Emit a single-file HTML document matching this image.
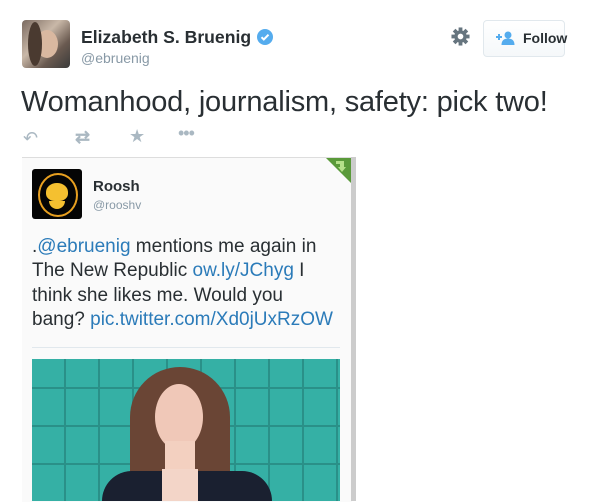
<!DOCTYPE html>
<html><head><meta charset="utf-8"><style>
body{margin:0;width:610px;height:501px;background:#fff;overflow:hidden;position:relative;font-family:"Liberation Sans",Arial,sans-serif;}
.a{position:absolute}
</style></head><body>
<div class="a" style="left:22px;top:20px;width:48px;height:48px;border-radius:4px;background:linear-gradient(135deg,#7a6a60,#c9b8a8 40%,#6a5a50 70%,#3a3a3a);overflow:hidden">
 <div class="a" style="left:14px;top:10px;width:22px;height:28px;border-radius:50%;background:#d9b8a0"></div>
 <div class="a" style="left:6px;top:2px;width:14px;height:44px;border-radius:50%;background:#4a3a30"></div>
</div>
<div class="a" style="left:81px;top:27px;font-size:17.6px;font-weight:bold;color:#292f33">Elizabeth S. Bruenig</div>
<svg class="a" style="left:257px;top:29px" width="16" height="16" viewBox="0 0 16 16"><circle cx="8" cy="8" r="8" fill="#55acee"/><path d="M4.5 8.2l2.3 2.3 4.7-4.8" stroke="#fff" stroke-width="2" fill="none"/></svg>
<div class="a" style="left:81px;top:50px;font-size:14px;color:#8899a6">@ebruenig</div>
<svg class="a" style="left:451px;top:27px" width="19" height="19" viewBox="0 0 20 20"><g fill="#66757f"><circle cx="10" cy="10" r="6.5"/><rect x="8" y="0.5" width="4" height="19"/><rect x="0.5" y="8" width="19" height="4"/><rect x="8" y="0.5" width="4" height="19" transform="rotate(45 10 10)"/><rect x="8" y="0.5" width="4" height="19" transform="rotate(-45 10 10)"/></g><circle cx="10" cy="10" r="3" fill="#fff"/></svg>
<div class="a" style="left:483px;top:20px;width:80px;height:35px;border:1px solid #e1e8ed;border-radius:4px;background:linear-gradient(#fff,#f5f8fa)"></div>
<svg class="a" style="left:496px;top:31px" width="20" height="14" viewBox="0 0 20 14"><g fill="#55acee"><rect x="0" y="5" width="6" height="2"/><rect x="2" y="3" width="2" height="6"/><circle cx="12" cy="4" r="3.5"/><path d="M5.5 14c0-5 3-6.5 6.5-6.5s6.5 1.5 6.5 6.5z"/></g></svg>
<div class="a" style="left:523px;top:30px;font-size:14px;font-weight:bold;color:#292f33">Follow</div>
<div class="a" style="left:21px;top:86px;font-size:29px;color:#292f33;letter-spacing:-0.2px">Womanhood, journalism, safety: pick two!</div>
<div class="a" style="left:23px;top:128px;font-size:18px;color:#aab8c2">
<span class="a" style="left:0;top:0">&#x21B6;</span><span class="a" style="left:52px;top:-1px;font-weight:bold">&#x21C4;</span><span class="a" style="left:106px;top:-2px">&#x2605;</span><span class="a" style="left:155px;top:-5px;letter-spacing:-1px">&bull;&bull;&bull;</span></div>
<div class="a" style="left:22px;top:157px;width:330px;height:344px;background:#fafafa;border-top:1px solid #ddd"></div>
<div class="a" style="left:351px;top:157px;width:5px;height:344px;background:#ccc"></div>
<svg class="a" style="left:326px;top:158px" width="25" height="25" viewBox="0 0 25 25"><path d="M0 0H25V25Z" fill="#5a9a3a"/><path d="M10 3h8v6h2l-4 5-4-5h2V6h-4z" fill="#b5e08a"/></svg>
<div class="a" style="left:32px;top:169px;width:50px;height:50px;border-radius:3px;background:#050505;overflow:hidden">
 <div class="a" style="left:6px;top:4px;width:36px;height:40px;border:2px solid #e8a020;border-radius:50%"></div>
 <div class="a" style="left:14px;top:14px;width:22px;height:18px;border-radius:50% 50% 40% 40%;background:#f5c030"></div>
 <div class="a" style="left:17px;top:32px;width:16px;height:8px;border-radius:0 0 8px 8px;background:#f5c030"></div>
</div>
<div class="a" style="left:93px;top:178px;font-size:15px;font-weight:bold;color:#292f33">Roosh</div>
<div class="a" style="left:93px;top:198px;font-size:12px;color:#8899a6">@rooshv</div>
<div class="a" style="left:32px;top:235px;width:320px;font-size:19px;line-height:24.3px;color:#292f33;white-space:nowrap">.<span style="color:#2b7bb9">@ebruenig</span> mentions me again in<br>The New Republic <span style="color:#2b7bb9">ow.ly/JChyg</span> I<br>think she likes me. Would you<br>bang? <span style="color:#2b7bb9">pic.twitter.com/Xd0jUxRzOW</span></div>
<div class="a" style="left:32px;top:347px;width:308px;height:1px;background:#e1e8ed"></div>
<div class="a" style="left:32px;top:359px;width:308px;height:142px;background:#35b0a5;overflow:hidden;background-image:repeating-linear-gradient(90deg,transparent 0 32px,#2a9088 32px 34px),repeating-linear-gradient(0deg,transparent 0 36px,#2a9088 36px 38px)">
 <div class="a" style="left:98px;top:8px;width:100px;height:150px;border-radius:50px 50px 0 0;background:#6a4535"></div>
 <div class="a" style="left:123px;top:25px;width:48px;height:66px;border-radius:50%;background:#f0c8b8"></div>
 <div class="a" style="left:133px;top:82px;width:30px;height:40px;background:#f3d0c0"></div>
 <div class="a" style="left:70px;top:112px;width:170px;height:40px;border-radius:30px 30px 0 0;background:#1a2030"></div>
 <div class="a" style="left:130px;top:110px;width:36px;height:40px;background:#f3d5c8"></div>
</div>
</body></html>
